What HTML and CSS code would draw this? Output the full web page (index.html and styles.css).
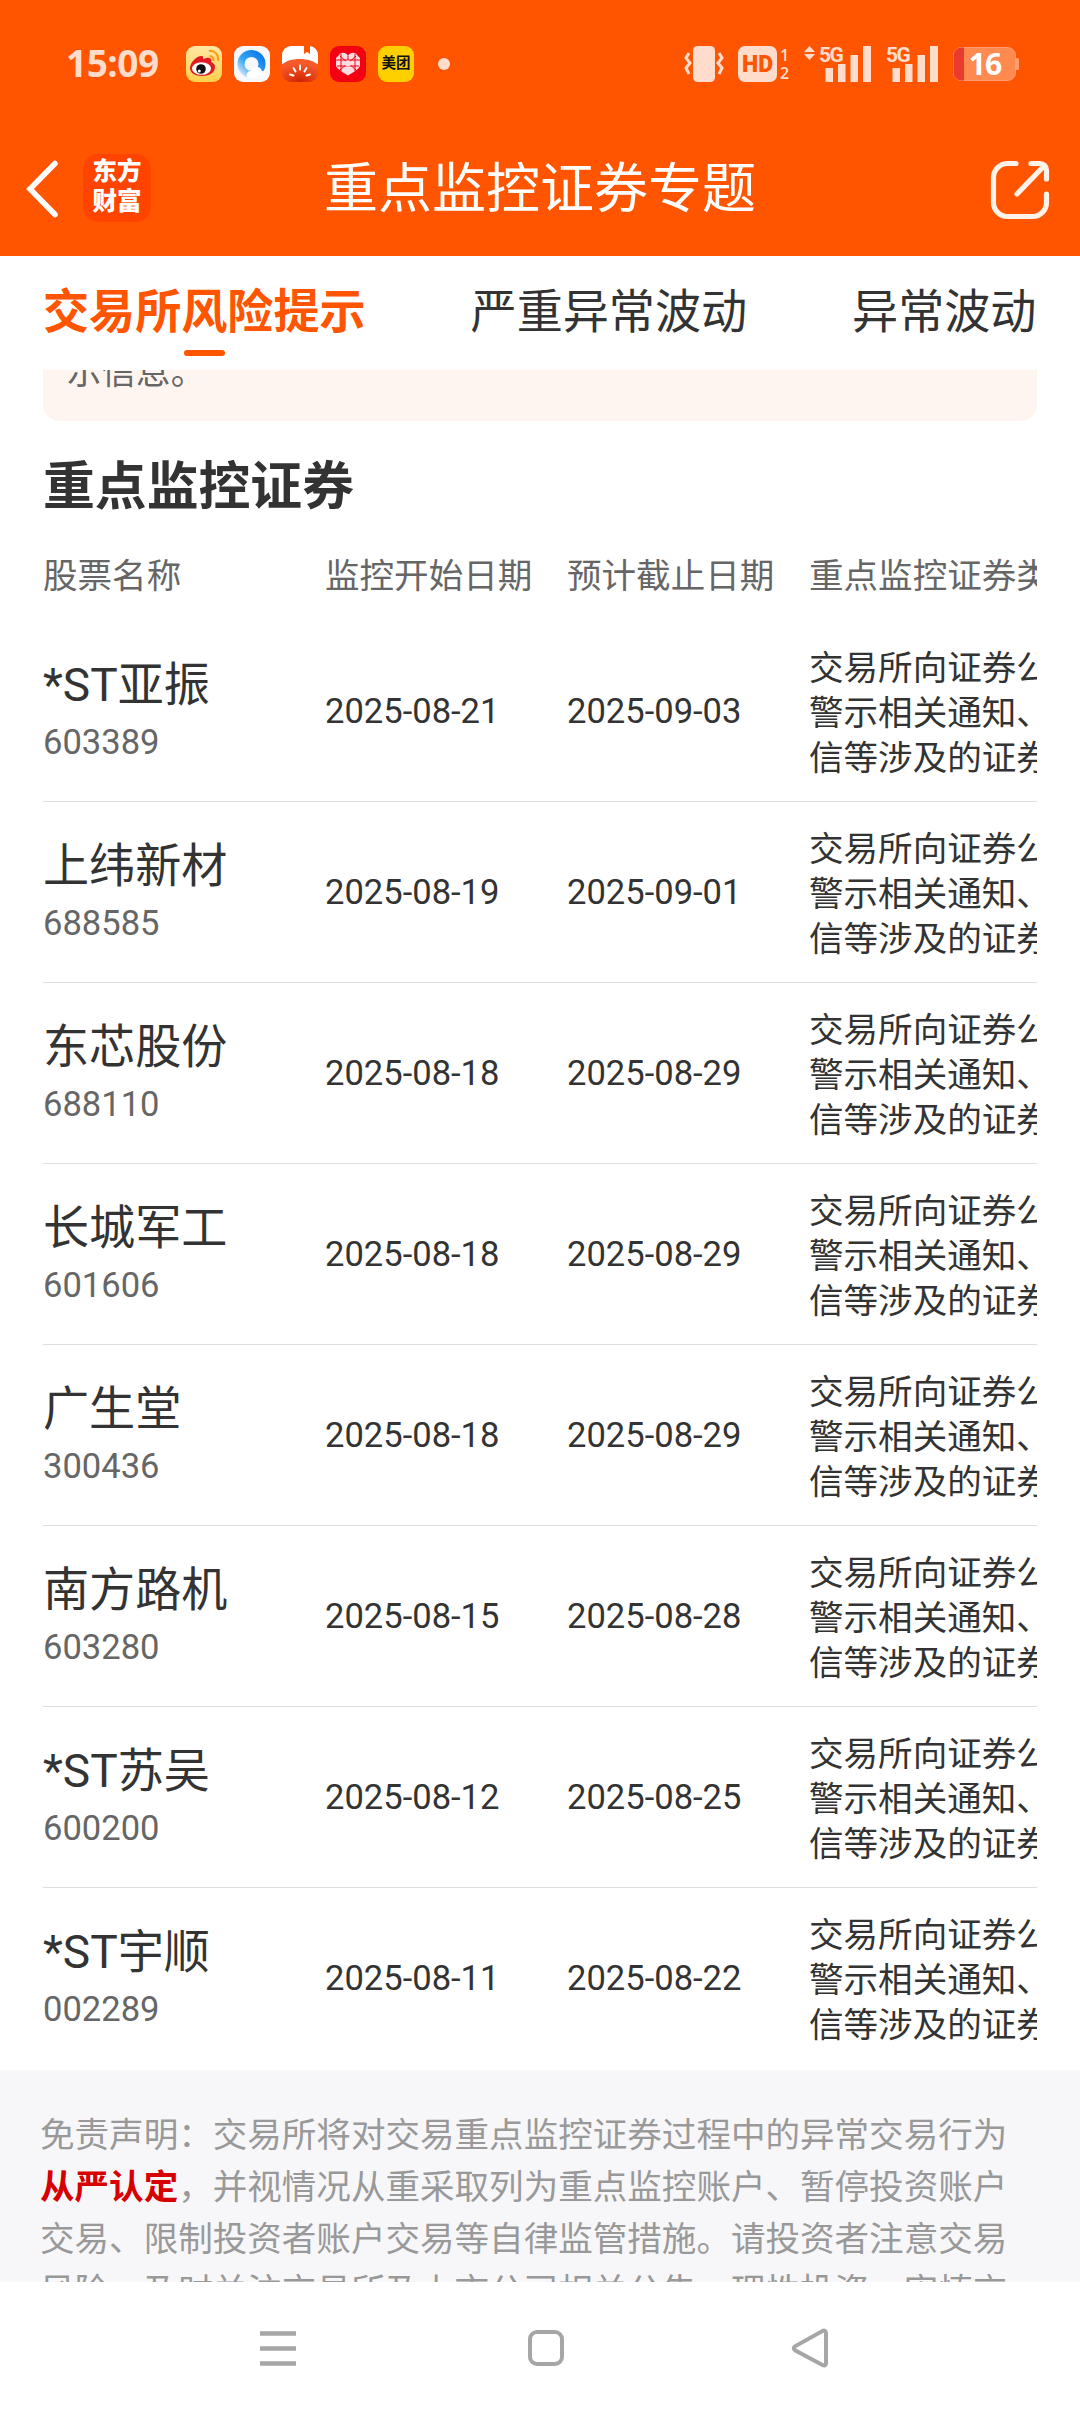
FILE: index.html
```html
<!DOCTYPE html>
<html lang="zh-CN">
<head>
    <meta charset="UTF-8">
    <meta name="viewport" content="width=device-width, initial-scale=1.0">
    <title>重点监控证券专题</title>
    <link rel="stylesheet" href="styles.css">
</head>
<body>
    <div class="status-bar">
        <span class="time">15:09</span>
        <div class="apps">
            <!-- weibo -->
            <svg width="36" height="36" viewBox="0 0 36 36">
                <defs>
                    <linearGradient id="weiboBg" x1="0" y1="0" x2="0" y2="1">
                        <stop offset="0" stop-color="#ffe8a6"/>
                        <stop offset="1" stop-color="#ffcf4a"/>
                    </linearGradient>
                </defs>
                <rect width="36" height="36" rx="9" fill="url(#weiboBg)"/>
                <path d="M4 22c0-6 8-13 12-12 2 .5 1 3 1 3s6-3 8 0c1 1.500 0 3 0 3s4 1 4 5c0 6-6 9-13 9S4 27 4 22z" fill="#e01b22"/>
                <ellipse cx="15.500" cy="22.500" rx="9.500" ry="6.300" fill="#fff"/>
                <circle cx="15" cy="23" r="4.800" fill="#111"/>
                <circle cx="13.300" cy="25" r="1.500" fill="#fff"/>
                <path d="M23 5c6-1 10 4 9 10M23.500 10c3 0 4.500 2 4 5" fill="none" stroke="#f9a11b" stroke-width="2.200"/>
            </svg>
            <!-- qq browser -->
            <svg width="36" height="36" viewBox="0 0 36 36">
                <defs>
                    <linearGradient id="ringBlue" x1="1" y1="0" x2="0" y2="1">
                        <stop offset="0" stop-color="#0b78e8"/>
                        <stop offset=".6" stop-color="#35a6f5"/>
                        <stop offset="1" stop-color="#d5e6f8"/>
                    </linearGradient>
                </defs>
                <rect width="36" height="36" rx="9" fill="#f6f8fc"/>
                <circle cx="17.500" cy="18" r="10.500" fill="none" stroke="url(#ringBlue)" stroke-width="7"/>
                <path d="M14 32a4 4 0 0 1 3-7c1-5 9-6 11 0 5 0 5 7 0 7z" fill="#fff"/>
            </svg>
            <!-- tomato novel -->
            <svg width="36" height="36" viewBox="0 0 36 36">
                <defs>
                    <radialGradient id="tomato" cx=".5" cy="1" r=".8">
                        <stop offset="0" stop-color="#cf2300"/>
                        <stop offset="1" stop-color="#f65a2a"/>
                    </radialGradient>
                </defs>
                <path d="M0 18V9a9 9 0 0 1 9-9h13v8l3-2 3 2V0a9 9 0 0 1 8 9v9z" fill="#fff"/>
                <path d="M0 19C6 11 29 11 36 19v8a9 9 0 0 1-9 9H9a9 9 0 0 1-9-9z" fill="url(#tomato)"/>
                <path d="M18 19.500v4M11.500 22l2 3.500M24.500 22l-2 3.500M8 28.500l3.500 1M28 28.500l-3.500 1" stroke="#fff" stroke-width="2" stroke-linecap="round"/>
            </svg>
            <!-- pinduoduo -->
            <svg width="36" height="36" viewBox="0 0 36 36">
                <rect width="36" height="36" rx="9" fill="#f40012"/>
                <path d="M18 10c2-4 7-4 9 -1l3 3v8c-2 4-8 7-12 9.500C14 27 8 24 6 20v-8l3-3c2-3 7-3 9 1z" fill="#ffdcdf"/>
                <path d="M11 8v17M18 10v4M25 8v17M6 14h24M7 20h22M10 10l16 14M26 10L10 24" stroke="#f40012" stroke-width="1"/>
                <circle cx="18" cy="17.500" r="3" fill="#ffdcdf"/>
            </svg>
            <span class="meituan">美团</span>
        </div>
        <i class="dot"></i>

        <div class="indicators">
            <svg class="vibrate" width="40" height="38" viewBox="0 0 40 38">
                <rect x="9" y="1" width="22" height="36" rx="4.500" fill="#ffdccc"/>
                <path d="M5 8L2 13l4 5-4 5 3 6M35 8l3 5-4 5 4 5-3 6" fill="none" stroke="#ffdccc" stroke-width="3"/>
            </svg>
            <div class="hd">HD</div>
            <div class="sim"><span>1</span><span>2</span></div>
            <svg class="signal" width="68" height="38" viewBox="0 0 68 38">
                <path d="M0 7l5.500-6L11 7zM0 9h11l-5.500 6z" fill="#ffdccc"/>
                <text x="15" y="16.500" class="net">5G</text>
                <path d="M21.500 23h7.500v14h-7.500zM34 19h7.500v18H34zM46.500 10H54v27h-7.500zM59 1h8v36h-8z" fill="#ffdccc"/>
            </svg>
            <svg class="signal2" width="54" height="38" viewBox="14 0 54 38">
                <text x="15" y="16.500" class="net">5G</text>
                <path d="M21.500 23h7.500v14h-7.500zM34 19h7.500v18H34zM46.500 10H54v27h-7.500zM59 1h8v36h-8z" fill="#ffdccc"/>
            </svg>
            <svg width="66" height="36" viewBox="0 0 66 36">
                <rect x=".5" y="1.500" width="62" height="33" rx="8" fill="#ff8a50" stroke="#ff9f70"/>
                <path d="M11 1.500H8.500a8 8 0 0 0-8 8v17a8 8 0 0 0 8 8H11z" fill="#ea3a2d"/>
                <path d="M63 12h1.500a1.500 1.500 0 0 1 1.500 1.500v9a1.500 1.500 0 0 1-1.500 1.500H63z" fill="#ff9f70"/>
                <text x="32" y="29" text-anchor="middle" class="level">16</text>
            </svg>
        </div>
    </div>

    <header class="header">
        <div class="header-left">
            <svg width="36" height="60" viewBox="0 0 36 60">
                <path d="M31 5.500L6 31l25 25.500" fill="none" stroke="#fff" stroke-width="5.500" stroke-linecap="round"/>
            </svg>
            <div class="logo">东方<br>财富</div>
        </div>
        <h1>重点监控证券专题</h1>
        <svg class="share" width="60" height="60" viewBox="0 0 60 60">
            <path d="M26 3.500H17.500a14 14 0 0 0-14 14v25a14 14 0 0 0 14 14h25a14 14 0 0 0 14-14V34M41 3.500h9a6.500 6.500 0 0 1 6.500 6.500v9M27 34L54 6" fill="none" stroke="#fff2e8" stroke-width="5.200" stroke-linecap="round"/>
        </svg>
    </header>

    <nav class="tabs">
        <a class="tab active">交易所风险提示</a>
        <a class="tab">严重异常波动</a>
        <a class="tab">异常波动</a>
    </nav>

    <main class="content">
        <div class="notice">示信息。</div>

        <h2>重点监控证券</h2>

        <div class="table">
            <div class="row head">
                <span>股票名称</span>
                <span>监控开始日期</span>
                <span>预计截止日期</span>
                <span>重点监控证券类型</span>
            </div>
            <div class="row">
                <div><p class="name">*ST亚振</p><p class="code">603389</p></div>
                <span>2025-08-21</span>
                <span>2025-09-03</span>
                <span class="type">交易所向证券公司<br>警示相关通知、函<br>信等涉及的证券</span>
            </div>
            <div class="row">
                <div><p class="name">上纬新材</p><p class="code">688585</p></div>
                <span>2025-08-19</span>
                <span>2025-09-01</span>
                <span class="type">交易所向证券公司<br>警示相关通知、函<br>信等涉及的证券</span>
            </div>
            <div class="row">
                <div><p class="name">东芯股份</p><p class="code">688110</p></div>
                <span>2025-08-18</span>
                <span>2025-08-29</span>
                <span class="type">交易所向证券公司<br>警示相关通知、函<br>信等涉及的证券</span>
            </div>
            <div class="row">
                <div><p class="name">长城军工</p><p class="code">601606</p></div>
                <span>2025-08-18</span>
                <span>2025-08-29</span>
                <span class="type">交易所向证券公司<br>警示相关通知、函<br>信等涉及的证券</span>
            </div>
            <div class="row">
                <div><p class="name">广生堂</p><p class="code">300436</p></div>
                <span>2025-08-18</span>
                <span>2025-08-29</span>
                <span class="type">交易所向证券公司<br>警示相关通知、函<br>信等涉及的证券</span>
            </div>
            <div class="row">
                <div><p class="name">南方路机</p><p class="code">603280</p></div>
                <span>2025-08-15</span>
                <span>2025-08-28</span>
                <span class="type">交易所向证券公司<br>警示相关通知、函<br>信等涉及的证券</span>
            </div>
            <div class="row">
                <div><p class="name">*ST苏吴</p><p class="code">600200</p></div>
                <span>2025-08-12</span>
                <span>2025-08-25</span>
                <span class="type">交易所向证券公司<br>警示相关通知、函<br>信等涉及的证券</span>
            </div>
            <div class="row">
                <div><p class="name">*ST宇顺</p><p class="code">002289</p></div>
                <span>2025-08-11</span>
                <span>2025-08-22</span>
                <span class="type">交易所向证券公司<br>警示相关通知、函<br>信等涉及的证券</span>
            </div>
        </div>

        <div class="disclaimer">
            免责声明：交易所将对交易重点监控证券过程中的异常交易行为<b>从严认定</b>，并视情况从重采取列为重点监控账户、暂停投资账户交易、限制投资者账户交易等自律监管措施。请投资者注意交易风险，及时关注交易所及上市公司相关公告，理性投资，审慎交易。
        </div>
    </main>

    <footer class="navbar">
        <svg width="40" height="40" viewBox="0 0 40 40">
            <path d="M2 5.500h36M2 20.500h36M2 35.500h36" stroke="#a6a6a6" stroke-width="4.500"/>
        </svg>
        <svg class="home" width="40" height="40" viewBox="0 0 40 40">
            <rect x="4" y="4" width="32" height="32" rx="7" fill="none" stroke="#a6a6a6" stroke-width="4"/>
        </svg>
        <svg width="40" height="40" viewBox="0 0 40 40">
            <path d="M36 5v30.500q-.5 3-3.500 1.500L5 22.300q-2.500-2 0-4L32.500 3q3-1.500 3.500 2z" fill="none" stroke="#a6a6a6" stroke-width="4"/>
        </svg>
    </footer>
</body>
</html>
```
FILE: styles.css
```css
:root {
    --orange: #ff5500;
    --pale: #ffdccc;
    --text: #333;
    --gray: #666;
    --fs-s: 34.56px;
    --fs-m: 46.08px;
}

* {
    box-sizing: border-box;
}

body {
    margin: 0;
    height: 2414px;
    display: flex;
    flex-direction: column;
    overflow: hidden;
    background: #fff;
    color: var(--text);
    font-family: Roboto, "Noto Sans CJK SC", sans-serif;
    font-size: var(--fs-s);
}

h1, h2, p {
    margin: 0;
}

svg {
    display: block;
    flex-shrink: 0;
}

/* status bar */
.status-bar {
    flex: 0 0 128px;
    display: flex;
    align-items: center;
    padding: 0 61px 0 66px;
    background: var(--orange);
    color: var(--pale);
}

.time {
    width: 120px;
    padding-bottom: 2px;
    font: 700 37px/44px "Open Sans", sans-serif;
    letter-spacing: -0.5px;
}

.apps {
    display: flex;
    gap: 12px;
}

.meituan {
    width: 36px;
    height: 36px;
    border-radius: 9px;
    background: #ffd000;
    color: #111;
    font-size: 14.5px;
    font-weight: 700;
    line-height: 36px;
    text-align: center;
}

.dot {
    width: 12px;
    height: 12px;
    margin-left: 24px;
    border-radius: 50%;
    background: var(--pale);
}

.indicators {
    display: flex;
    align-items: center;
    margin-left: auto;
}

.hd {
    width: 39px;
    height: 36px;
    margin-left: 14px;
    border-radius: 7px;
    background: var(--pale);
    color: var(--orange);
    font: 900 23px/37px Roboto, sans-serif;
    text-align: center;
}

.sim {
    display: flex;
    flex-direction: column;
    width: 12px;
    margin: 0 12px 0 3px;
    font: 600 16px/18px "Open Sans", sans-serif;
}

.signal2 {
    margin: 0 14px 0 13px;
}

.net {
    fill: #ffdccc;
    font: 700 21px Roboto, sans-serif;
    letter-spacing: -1.5px;
}

.level {
    fill: #fff;
    font: 700 30px "Open Sans", sans-serif;
    letter-spacing: -1px;
}

/* header */
.header {
    flex: 0 0 128px;
    display: grid;
    grid-template-columns: 200px 1fr 194px;
    align-items: center;
    padding: 0 30px 4px 24px;
    background: var(--orange);
    color: #fff;
}

.header-left {
    display: flex;
    align-items: center;
    gap: 23px;
    padding-bottom: 4px;
}

.logo {
    width: 68px;
    height: 68px;
    padding-top: 3px;
    border-radius: 15px;
    background: #ff4400;
    font-size: 24.5px;
    font-weight: 900;
    line-height: 30px;
    text-align: center;
}

.header h1 {
    font-size: 54px;
    font-weight: 400;
    line-height: 70px;
    text-align: center;
}

.share {
    justify-self: end;
}

/* tabs */
.tabs {
    flex: 0 0 114px;
    display: flex;
    gap: 105px;
    padding-left: 43px;
    font-size: var(--fs-m);
}

.tab {
    position: relative;
    line-height: 113px;
    white-space: nowrap;
}

.tab.active {
    color: var(--orange);
    font-weight: 700;
}

.tab.active::after {
    content: "";
    position: absolute;
    left: 50%;
    bottom: 14px;
    width: 41px;
    height: 6px;
    margin-left: -20px;
    border-radius: 3px;
    background: var(--orange);
}

/* scrolled content */
.content {
    flex: 1;
    min-height: 0;
    overflow: hidden;
}

.notice {
    height: 80px;
    margin: -29px 43px 0;
    padding: 5px 24px;
    border-radius: 17px;
    background: #fff5f0;
    color: var(--gray);
    line-height: 52px;
}

.content h2 {
    margin: 32px 43px 0;
    font-size: 51.84px;
    font-weight: 700;
    line-height: 70px;
}

.table {
    margin: 0 43px;
    overflow: hidden;
}

.row {
    display: grid;
    grid-template-columns: 282px 242px 242px 300px;
    align-items: center;
    height: 181px;
    padding-top: 1px;
    border-bottom: 1px solid #dedede;
    line-height: 45px;
    white-space: nowrap;
}

.row:last-child {
    height: 182px;
    padding-bottom: 2px;
    border-bottom: none;
}

.row.head {
    height: 98px;
    padding-top: 9px;
    border-bottom: none;
    color: var(--gray);
}

.row > div {
    padding-bottom: 3px;
}

.name {
    font-size: var(--fs-m);
    line-height: 64px;
}

.code {
    color: var(--gray);
    line-height: 50px;
}

.type {
    padding-top: 3px;
}

.disclaimer {
    height: 260px;
    padding: 40px 40px 0;
    background: #f7f7fa;
    color: #999;
    line-height: 51.84px;
}

.disclaimer b {
    color: #d60000;
}

/* system navigation */
.navbar {
    flex: 0 0 132px;
    display: flex;
    justify-content: center;
    gap: 226px;
    padding: 46px 0 0 8px;
    background: #fff;
}

.home {
    margin: 0 -2px 0 2px;
}
```
